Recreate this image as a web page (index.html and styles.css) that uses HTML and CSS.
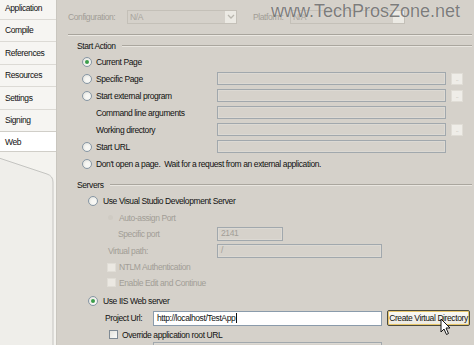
FILE: index.html
```html
<!DOCTYPE html>
<html lang="en">
<head>
    <meta charset="UTF-8">
    <title>Web - Project Properties</title>
    <link rel="stylesheet" href="styles.css">
</head>
<body>
    <div class="window">
        <aside class="tabs">
            <div class="tab first">Application</div>
            <div class="tab">Compile</div>
            <div class="tab">References</div>
            <div class="tab">Resources</div>
            <div class="tab">Settings</div>
            <div class="tab">Signing</div>
            <div class="tab active">Web</div>
            <svg class="tab-panel" width="57" height="200" viewBox="0 0 57 200">
                <path d="M-1 6 L47 22 Q53 24 53 30 L53 200 L-1 200 Z" fill="#efeeea" stroke="#c4c4c1" stroke-width="1"/>
            </svg>
        </aside>

        <main class="page">
            <div class="config-bar">
                <span class="muted config-label">Configuration:</span>
                <div class="combo">
                    <span>N/A</span>
                    <i class="combo-btn">
                        <svg width="8" height="6" viewBox="0 0 8 6"><path d="M1 1 L4 4 L7 1" fill="none" stroke="#b9b6ae" stroke-width="1.3"/></svg>
                    </i>
                </div>
                <span class="muted platform-label">Platform:</span>
                <div class="combo combo-short">
                    <span>N/A</span>
                    <i class="combo-btn"></i>
                </div>
            </div>
            <div class="watermark">www.TechProsZone.net</div>
            <div class="rule"></div>

            <div class="group-head"><span>Start Action</span><i></i></div>
            <div class="action-row">
                <span class="radio checked"></span><label>Current Page</label>
            </div>
            <div class="action-row">
                <span class="radio"></span><label>Specific Page</label>
                <span class="field"></span><span class="dots">..</span>
            </div>
            <div class="action-row">
                <span class="radio"></span><label>Start external program</label>
                <span class="field"></span><span class="dots">..</span>
            </div>
            <div class="action-row">
                <span></span><label>Command line arguments</label>
                <span class="field"></span>
            </div>
            <div class="action-row">
                <span></span><label>Working directory</label>
                <span class="field"></span><span class="dots">..</span>
            </div>
            <div class="action-row">
                <span class="radio"></span><label>Start URL</label>
                <span class="field"></span>
            </div>
            <div class="action-row">
                <span class="radio"></span><label class="wide">Don't open a page.&nbsp; Wait for a request from an external application.</label>
            </div>

            <div class="group-head servers-head"><span>Servers</span><i></i></div>
            <div class="srv-row srv-main">
                <span class="radio"></span><label>Use Visual Studio Development Server</label>
            </div>
            <div class="srv-row srv-auto muted">
                <span class="radio-off"></span><label>Auto-assign Port</label>
            </div>
            <div class="srv-row srv-port muted">
                <label>Specific port</label><span class="field field-port">2141</span>
            </div>
            <div class="srv-row srv-vpath muted">
                <label>Virtual path:</label><span class="field field-vpath">/</span>
            </div>
            <div class="srv-row srv-check muted">
                <span class="check-off"></span><label>NTLM Authentication</label>
            </div>
            <div class="srv-row srv-check srv-edit muted">
                <span class="check-off"></span><label>Enable Edit and Continue</label>
            </div>
            <div class="srv-row srv-main srv-iis">
                <span class="radio checked"></span><label>Use IIS Web server</label>
            </div>
            <div class="srv-row srv-url">
                <label>Project Url:</label>
                <span class="url-input">http://localhost/TestApp<i class="caret"></i></span>
                <button class="vdir-btn">Create Virtual Directory</button>
            </div>
            <div class="srv-row srv-override">
                <span class="check"></span><label>Override application root URL</label>
            </div>
            <div class="srv-row srv-root">
                <span class="field field-root"></span>
            </div>

            <svg class="pointer" width="12" height="18" viewBox="0 0 12 18">
                <path d="M1 1 L1 14 L4 11 L6.5 16.5 L8.5 15.5 L6 10 L10 10 Z" fill="#fff" stroke="#111" stroke-width="1"/>
            </svg>
        </main>
    </div>
</body>
</html>
```

FILE: styles.css
```css
html, body {
    margin: 0;
    padding: 0;
}

body {
    width: 474px;
    height: 345px;
    overflow: hidden;
    background-color: #d5d1ca;
    font-family: 'Liberation Sans', Arial, sans-serif;
    font-size: 8.5px;
    letter-spacing: -0.4px;
    color: #111;
}

.window {
    display: flex;
    height: 345px;
}

/* left tab strip */

.tabs {
    width: 57px;
    flex: none;
    display: flex;
    flex-direction: column;
    background-color: #f4f3ef;
    border-right: 1px solid #c9c6bf;
    box-sizing: border-box;
    overflow: hidden;
}

.tab {
    height: 22.5px;
    flex: none;
    display: flex;
    align-items: center;
    padding-left: 5px;
    box-sizing: border-box;
    background-color: #f6f5f2;
    border-bottom: 1px solid #dcdad5;
}

.tab.first {
    margin-top: -3px;
}

.tab.active {
    background-color: #ffffff;
    border-top: 1px solid #d0cec8;
    border-bottom: 1px solid #d0cec8;
    margin-top: -1px;
    height: 21px;
    margin-right: -1px;
}

.tab-panel {
    display: block;
    flex: none;
}

/* main page */

.page {
    flex: 1;
    position: relative;
    padding-right: 2px;
}

.muted {
    color: #a19d96;
}

.config-bar {
    height: 34px;
    display: flex;
    align-items: center;
    padding-left: 11px;
}

.config-label {
    width: 59px;
}

.platform-label {
    width: 37px;
    margin-left: 16px;
}

.combo {
    width: 110px;
    height: 14px;
    box-sizing: border-box;
    border: 1px solid #c4c0b8;
    display: flex;
    align-items: center;
    justify-content: space-between;
    padding-left: 2px;
    color: #a8a49d;
}

.combo-short {
    width: 115px;
}

.combo-btn {
    width: 11px;
    height: 12px;
    background-color: #eceae4;
    display: flex;
    align-items: center;
    justify-content: center;
}

.watermark {
    position: absolute;
    left: 214px;
    top: 1px;
    font-size: 18px;
    letter-spacing: 0;
    color: rgba(88, 88, 88, 0.75);
    text-shadow: 0 0 1px rgba(255, 255, 255, 0.6);
    white-space: nowrap;
}

.rule {
    margin-left: 11px;
    border-top: 1px solid #a8a49c;
    border-bottom: 1px solid #ebe8e2;
}

.group-head {
    height: 14px;
    margin-top: 3px;
    display: flex;
    align-items: center;
    padding-left: 20px;
}

.group-head i {
    flex: 1;
    margin-left: 6px;
    border-top: 1px solid #aaa69e;
    border-bottom: 1px solid #e9e6e0;
}

.servers-head {
    margin-top: 6px;
}

/* start action rows */

.action-row {
    height: 17px;
    display: grid;
    grid-template-columns: 14px 121px 229px 17px;
    align-items: center;
    padding-left: 25px;
}

.action-row label {
    white-space: nowrap;
}

.action-row .wide {
    grid-column: 2 / -1;
}

.field {
    display: block;
    height: 13px;
    box-sizing: border-box;
    border: 1px solid #a1a8ad;
    box-shadow: inset 0 0 0 1px #dcd9d3;
    background-color: #d6d2cb;
    color: #a29e97;
    padding-left: 3px;
    line-height: 11px;
}

.dots {
    width: 12px;
    height: 12px;
    margin-left: 5px;
    background-color: #efede8;
    border: 1px solid #e0ddd6;
    box-sizing: border-box;
    color: #b5b2ab;
    font-size: 6px;
    line-height: 10px;
    text-align: center;
}

.radio {
    width: 10px;
    height: 10px;
    box-sizing: border-box;
    border: 1px solid #8797a5;
    border-radius: 50%;
    background: radial-gradient(circle at 60% 60%, #f7f7f4 30%, #dcdcd6 100%);
    position: relative;
}

.radio.checked::after {
    content: "";
    position: absolute;
    left: 2px;
    top: 2px;
    width: 4px;
    height: 4px;
    border-radius: 50%;
    background-color: #3c9e4a;
}

/* server rows */

.srv-row {
    display: flex;
    align-items: center;
    height: 17px;
    white-space: nowrap;
}

.srv-main {
    padding-left: 31px;
}

.srv-main .radio {
    margin-right: 5px;
}

.srv-auto {
    padding-left: 51px;
}

.radio-off {
    width: 5px;
    height: 5px;
    border-radius: 50%;
    background-color: #cfcbc3;
    margin-right: 6px;
}

.srv-port {
    height: 16px;
    padding-left: 61px;
}

.srv-port label {
    width: 99px;
}

.field-port {
    width: 66px;
    height: 14px;
}

.srv-vpath {
    padding-left: 51px;
}

.srv-vpath label {
    width: 109px;
}

.field-vpath {
    width: 165px;
    height: 14px;
}

.srv-check {
    height: 16px;
    padding-left: 50px;
}

.srv-edit {
    height: 15px;
}

.check-off {
    width: 9px;
    height: 9px;
    box-sizing: border-box;
    background-color: #ebe8e2;
    border: 1px solid #e0ddd6;
    margin-right: 3px;
}

.srv-iis {
    margin-top: 3px;
    height: 16px;
}

.srv-url {
    height: 18px;
    padding-left: 48px;
}

.srv-url label {
    width: 48px;
}

.url-input {
    width: 229px;
    height: 15px;
    box-sizing: border-box;
    border: 1px solid #8a9bab;
    background-color: #ffffff;
    padding-left: 3px;
    display: flex;
    align-items: center;
    color: #111;
}

.caret {
    width: 1px;
    height: 10px;
    background-color: #111;
    margin-left: 1px;
}

.vdir-btn {
    margin-left: 5px;
    width: 83px;
    height: 16px;
    padding: 0;
    box-sizing: border-box;
    font-family: inherit;
    font-size: 8.5px;
    letter-spacing: -0.4px;
    color: #111;
    border: 1px solid #4a4a3e;
    border-radius: 2px;
    background: linear-gradient(#fbfaf6, #ece9df);
    box-shadow: inset 0 0 0 1px #e8c66a;
}

.srv-override {
    height: 15px;
    padding-left: 52px;
}

.check {
    width: 9px;
    height: 9px;
    box-sizing: border-box;
    border: 1px solid #7f8a94;
    background: linear-gradient(135deg, #e4e3dd, #fbfbf9);
    margin-right: 4px;
}

.srv-root {
    padding-left: 96px;
    align-items: flex-start;
}

.field-root {
    width: 229px;
    height: 13px;
}

.pointer {
    position: absolute;
    left: 383px;
    top: 318px;
}
```
